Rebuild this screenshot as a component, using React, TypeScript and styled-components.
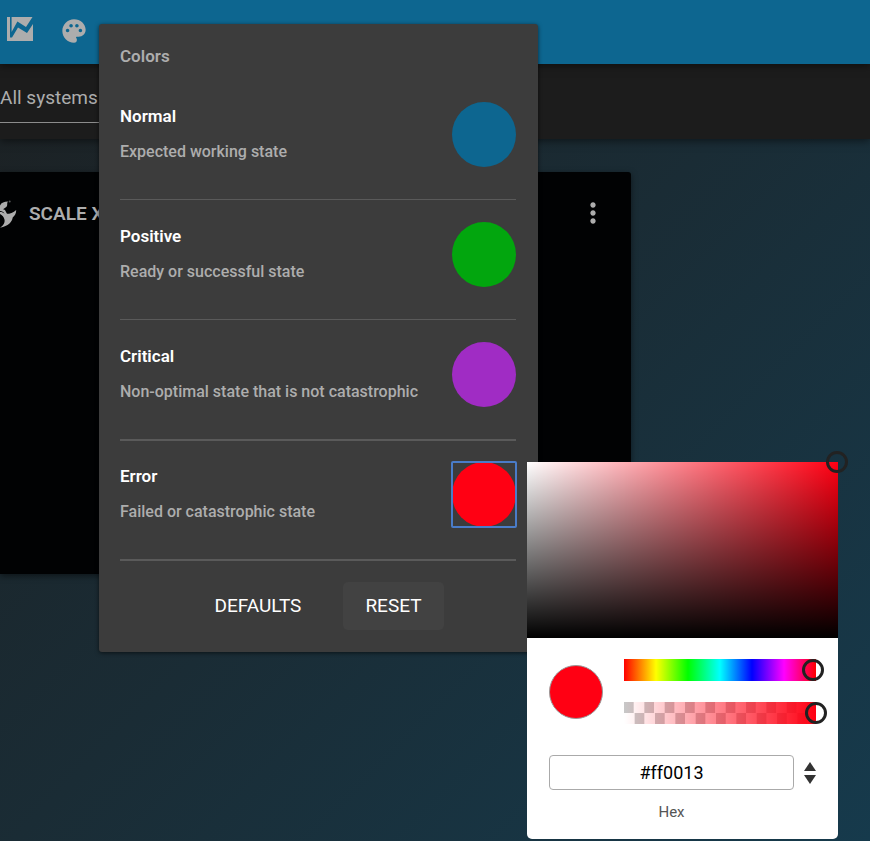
import React, { useState } from 'react';
import styled, { createGlobalStyle } from 'styled-components';
import { MdMoreVert, MdPalette } from 'react-icons/md';

const GlobalStyle = createGlobalStyle`
  *, *::before, *::after { box-sizing: border-box; }
  body {
    margin: 0;
    font-family: Roboto, "Liberation Sans", sans-serif;
    font-size: 16px;
    background: #1b2a32;
  }
  button, input, select { font: inherit; color: inherit; }
  h1, h2, h3, p { margin: 0; }
`;

const Page = styled.div`
  position: relative;
  min-height: 100vh;
  overflow: hidden;
  color: #adadad;
  background: linear-gradient(135deg, #1c2022 0%, #1a2c35 50%, #163a4c 100%);
`;

const TopBar = styled.header`
  position: relative;
  z-index: 2;
  display: flex;
  align-items: center;
  gap: 22px;
  height: 64px;
  padding: 0 4px 2px;
  background: #0d6690;
  box-shadow: 0 2px 8px rgba(0, 0, 0, 0.5);
`;

const IconButton = styled.button`
  display: flex;
  align-items: center;
  justify-content: center;
  width: 32px;
  height: 32px;
  padding: 0;
  border: 0;
  color: #adadad;
  background: none;
  cursor: pointer;
`;

const FilterBar = styled.div`
  position: relative;
  z-index: 1;
  height: 75px;
  padding-top: 10px;
  background: #1c1c1c;
  box-shadow: 0 2px 8px rgba(0, 0, 0, 0.5);
`;

const SystemSelect = styled.select`
  display: block;
  width: 240px;
  height: 49px;
  padding: 0 0 2px;
  appearance: none;
  border: 0;
  border-bottom: 1px solid #8c8c8c;
  border-radius: 0;
  font-size: 19px;
  background: transparent;
`;

const Content = styled.main`
  padding-top: 33px;
`;

const SystemCard = styled.article`
  max-width: 631px;
  min-height: 402px;
  padding: 24px 22px 24px 0;
  border-radius: 0 3px 3px 0;
  background: #010203;
  box-shadow: 0 2px 6px rgba(0, 0, 0, 0.5);
`;

const CardHeader = styled.div`
  display: flex;
  align-items: center;
  height: 34px;
`;

const CardTitle = styled.h2`
  flex: 1;
  margin-left: 12px;
  font-size: 19px;
  font-weight: 600;
`;

const Dialog = styled.section`
  position: absolute;
  z-index: 3;
  top: 24px;
  left: 99px;
  width: 439px;
  padding: 20px 22px 22px 21px;
  border-radius: 3px;
  background: #3c3c3c;
  box-shadow: 0 1px 4px rgba(0, 0, 0, 0.6);
`;

const DialogTitle = styled.h1`
  height: 36px;
  font-size: 17px;
  line-height: 24px;
  font-weight: 600;
`;

const StateRow = styled.div<{ $heavy: boolean }>`
  display: flex;
  justify-content: space-between;
  box-sizing: content-box;
  height: 97px;
  padding-top: 22px;
  border-bottom: ${(p) => (p.$heavy ? 2 : 1)}px solid #5a5a5a;
  margin-bottom: ${(p) => (p.$heavy ? -1 : 0)}px;
`;

const StateName = styled.h3`
  margin-top: 2px;
  font-size: 17px;
  line-height: 24px;
  font-weight: 600;
  color: #fff;
`;

const StateText = styled.p`
  margin-top: 12px;
  line-height: 24px;
  font-weight: 500;
`;

const SwatchHolder = styled.div`
  position: relative;
  flex: none;
`;

const SwatchFrame = styled.div<{ $active: boolean }>`
  display: flex;
  outline: ${(p) => (p.$active ? '2px solid #4a7cc8' : 'none')};
  outline-offset: -1px;
  border-radius: 1px;
`;

const Swatch = styled.button<{ $color: string }>`
  width: 64px;
  height: 65px;
  padding: 0;
  border: 0;
  border-radius: 50%;
  background: ${(p) => p.$color};
  cursor: pointer;
`;

const Actions = styled.div`
  display: flex;
  justify-content: center;
  gap: 20px;
  padding-top: 22px;
`;

const ActionButton = styled.button<{ $raised?: boolean }>`
  height: 48px;
  padding: 0 22px 2px;
  border: 0;
  border-radius: 5px;
  font-size: 19px;
  color: #fff;
  background: ${(p) => (p.$raised ? '#424242' : 'transparent')};
  cursor: pointer;
`;

const Picker = styled.div`
  position: absolute;
  z-index: 4;
  top: 0;
  left: 75px;
  width: 311px;
  border-radius: 0 0 5px 5px;
  color: #000;
  background: #fff;
`;

const ShadeField = styled.div`
  position: relative;
  height: 176px;
  background:
    linear-gradient(to top, #000, transparent),
    linear-gradient(to right, #fff, transparent),
    #ff0013;
`;

const ShadePointer = styled.button`
  position: absolute;
  top: -11px;
  right: -10px;
  width: 22px;
  height: 22px;
  padding: 0;
  border: 3px solid #222;
  border-radius: 50%;
  background: none;
`;

const PickerBody = styled.div`
  padding: 21px 22px 18px;
`;

const SliderArea = styled.div`
  display: flex;
  align-items: center;
  gap: 21px;
`;

const Preview = styled.div`
  flex: none;
  width: 54px;
  height: 54px;
  border: 1px solid #999;
  border-radius: 50%;
  background: #ff0013;
`;

const Sliders = styled.div`
  display: grid;
  flex: 1;
  gap: 21px;
`;

const Track = styled.div`
  display: flex;
  height: 22px;
`;

const HueTrack = styled(Track)`
  background: linear-gradient(to right, #f00, #ff0, #0f0, #0ff, #00f, #f0f, #f00);
`;

const AlphaTrack = styled(Track)`
  background:
    linear-gradient(to right, transparent, #ff0013),
    repeating-conic-gradient(#fff 0 25%, #c8c8c8 0 50%) 0 0 / 10.6% 100%;
`;

const Range = styled.input`
  flex: none;
  width: calc(100% + 22px);
  height: 22px;
  margin: 0 -11px;
  appearance: none;
  background: transparent;
  cursor: pointer;

  &::-webkit-slider-thumb {
    width: 22px;
    height: 22px;
    appearance: none;
    border: 3px solid #222;
    border-radius: 50%;
    background: transparent;
  }
`;

const ValueArea = styled.div`
  display: grid;
  grid-template-columns: 1fr 12px;
  align-items: center;
  column-gap: 10px;
  row-gap: 13px;
  margin-top: 31px;
`;

const HexInput = styled.input`
  width: 100%;
  height: 35px;
  padding: 0;
  border: 1px solid #aaa;
  border-radius: 4px;
  font-size: 18px;
  text-align: center;
  background: #fff;
`;

const HexLabel = styled.label`
  font-size: 15px;
  line-height: 18px;
  text-align: center;
  color: #555;
`;

const FormatButton = styled.button`
  display: flex;
  padding: 0;
  border: 0;
  background: none;
  cursor: pointer;
`;

const ChartIcon = () => (
  <svg width="26" height="28" viewBox="0 0 26 28" aria-hidden="true">
    <path fill="currentColor" d="M0 0h3v20.500h2L11 10.500l9 5.500 6-9V24H0z" />
    <path fill="currentColor" d="M4.600 0H25.500l-6.500 10-8.600-5.500L4.600 15z" />
  </svg>
);

const DragonIcon = () => (
  <svg width="17" height="30" viewBox="0 0 17 30" aria-hidden="true">
    <path
      fill="currentColor"
      d="M0 7.500C1.500 4.500 4 3.500 8 3.500 6.700 4.800 7.600 6.300 7 8 6.200 9.700 4.500 10 3 11.300 4.500 11.500 5.500 12.500 6 14L7 15.800C9.500 15.800 13.500 15 16.200 12 16.200 15.500 14.800 17.800 12.700 19.500 12 24 8.500 28 0 29.700 3.500 27.500 5 24.500 4.600 22 4.200 19 2 17 0 16V14C1.700 13.800 3.200 14.500 4.500 15.800 3.700 13.800 2 13 0 13z"
    />
    <circle cx="9.700" cy="3.500" r="1" fill="currentColor" opacity=".5" />
  </svg>
);

const UpDownIcon = () => (
  <svg width="12" height="22" viewBox="0 0 12 22" fill="#333" aria-hidden="true">
    <path d="M6 0l6 9H0z" />
    <path d="M6 22L0 13h12z" />
  </svg>
);

const states = [
  { name: 'Normal', text: 'Expected working state', color: '#0d6690' },
  { name: 'Positive', text: 'Ready or successful state', color: '#02a60e' },
  { name: 'Critical', text: 'Non-optimal state that is not catastrophic', color: '#a02cc4', heavy: true },
  { name: 'Error', text: 'Failed or catastrophic state', color: '#ff0013', heavy: true, active: true },
];

const ColorPicker = () => {
  const [hex, setHex] = useState('#ff0013');
  return (
    <Picker>
      <ShadeField>
        <ShadePointer type="button" aria-label="Shade" />
      </ShadeField>
      <PickerBody>
        <SliderArea>
          <Preview />
          <Sliders>
            <HueTrack>
              <Range type="range" aria-label="Hue" min={0} max={360} defaultValue={355} />
            </HueTrack>
            <AlphaTrack>
              <Range type="range" aria-label="Opacity" min={0} max={100} defaultValue={100} />
            </AlphaTrack>
          </Sliders>
        </SliderArea>
        <ValueArea>
          <HexInput id="hex" value={hex} onChange={(e) => setHex(e.target.value)} />
          <FormatButton type="button" aria-label="Change format">
            <UpDownIcon />
          </FormatButton>
          <HexLabel htmlFor="hex">Hex</HexLabel>
        </ValueArea>
      </PickerBody>
    </Picker>
  );
};

export default function App() {
  return (
    <Page>
      <GlobalStyle />
      <TopBar>
        <IconButton type="button" aria-label="Charts">
          <ChartIcon />
        </IconButton>
        <IconButton type="button" aria-label="Colors">
          <MdPalette size={28} />
        </IconButton>
      </TopBar>
      <FilterBar>
        <SystemSelect aria-label="Systems">
          <option>All systems</option>
        </SystemSelect>
      </FilterBar>
      <Content>
        <SystemCard>
          <CardHeader>
            <DragonIcon />
            <CardTitle>SCALE X</CardTitle>
            <IconButton type="button" aria-label="More">
              <MdMoreVert size={32} />
            </IconButton>
          </CardHeader>
        </SystemCard>
      </Content>
      <Dialog role="dialog" aria-labelledby="dialog-title">
        <DialogTitle id="dialog-title">Colors</DialogTitle>
        {states.map((s) => (
          <StateRow key={s.name} $heavy={!!s.heavy}>
            <div>
              <StateName>{s.name}</StateName>
              <StateText>{s.text}</StateText>
            </div>
            <SwatchHolder>
              <SwatchFrame $active={!!s.active}>
                <Swatch type="button" aria-label={`${s.name} color`} $color={s.color} />
              </SwatchFrame>
              {s.active && <ColorPicker />}
            </SwatchHolder>
          </StateRow>
        ))}
        <Actions>
          <ActionButton type="button">DEFAULTS</ActionButton>
          <ActionButton type="button" $raised>
            RESET
          </ActionButton>
        </Actions>
      </Dialog>
    </Page>
  );
}
